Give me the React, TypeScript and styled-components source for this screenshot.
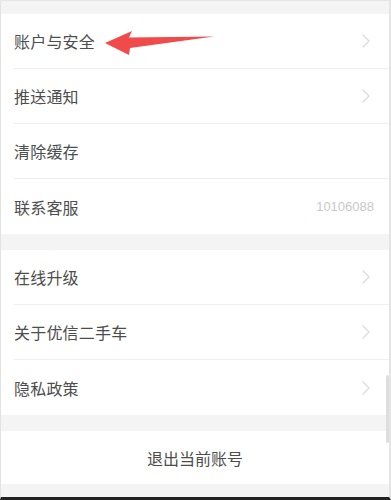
import React from "react";
import styled, { createGlobalStyle } from "styled-components";

const Global = createGlobalStyle`
  html, body { margin: 0; padding: 0; background: #f4f4f4; }
  body { font-family: "Noto Sans CJK SC", "Noto Sans", sans-serif; }
`;

const Page = styled.div`
  position: relative;
  width: 391px;
  height: 500px;
  box-sizing: border-box;
  background: #f4f4f4;
  border-top: 1px solid #e6e6e6;
  border-left: 1px solid #e2e2e2;
  border-right: 2px solid #e4e4e4;
  border-bottom: 3px solid #222;
  padding-top: 13px;
  display: flex;
  flex-direction: column;
  gap: 16px;
  overflow: hidden;
`;

const Group = styled.div`
  background: #fff;
  display: flex;
  flex-direction: column;
`;

const Row = styled.div`
  padding-left: 13px;
  height: 55px;
  box-sizing: border-box;
  display: flex;
`;

const RowInner = styled.div<{ $last?: boolean }>`
  flex: 1;
  display: flex;
  align-items: center;
  justify-content: space-between;
  padding-right: 19px;
  border-bottom: ${(p) => (p.$last ? "none" : "1px solid #efefef")};
`;

const Label = styled.span`
  font-size: 16px;
  color: #4d4d4d;
  letter-spacing: 0.2px;
`;

const Value = styled.span`
  font-family: "Liberation Sans", Arial, sans-serif;
  font-size: 13px;
  color: #c8c8c8;
  margin-right: -4px;
`;

const Logout = styled.div`
  background: #fff;
  height: 53px;
  display: flex;
  align-items: center;
  justify-content: center;
  font-size: 16px;
  color: #4d4d4d;
`;

const Arrow = styled.svg`
  position: absolute;
  left: 0;
  top: 0;
  pointer-events: none;
`;

const Scrollbar = styled.div`
  position: absolute;
  right: 0;
  top: 374px;
  width: 3px;
  height: 68px;
  border-radius: 2px;
  background: #dedede;
`;

const Chevron = () => (
  <svg width="8" height="14" viewBox="0 0 8 14">
    <path d="M1 1 L7 7 L1 13" fill="none" stroke="#dadada" strokeWidth="1.2" strokeLinecap="round" strokeLinejoin="round" />
  </svg>
);

type Item = { label: string; value?: string };

const group1: Item[] = [
  { label: "账户与安全" },
  { label: "推送通知" },
  { label: "清除缓存", value: "" },
  { label: "联系客服", value: "10106088" },
];
const group2: Item[] = [
  { label: "在线升级" },
  { label: "关于优信二手车" },
  { label: "隐私政策" },
];

const renderGroup = (items: Item[]) => (
  <Group>
    {items.map((it, i) => {
      const last = i === items.length - 1;
      return (
        <Row key={it.label}>
          <RowInner $last={last}>
            <Label>{it.label}</Label>
            {it.value === undefined ? <Chevron /> : it.value ? <Value>{it.value}</Value> : null}
          </RowInner>
        </Row>
      );
    })}
  </Group>
);

export default function App() {
  return (
    <>
      <Global />
      <Page>
        {renderGroup(group1)}
        {renderGroup(group2)}
        <Logout>退出当前账号</Logout>
        <Arrow width="391" height="500" viewBox="0 0 391 500">
          <polygon
            points="104,42 131,30 128,36.5 213,35.5 129,47 128,54"
            fill="#f04a4a"
          />
        </Arrow>
        <Scrollbar />
      </Page>
    </>
  );
}
